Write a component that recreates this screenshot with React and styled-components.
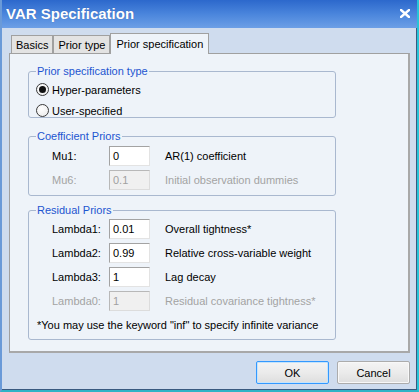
import { styled, createGlobalStyle } from "styled-components";

const GlobalStyle = createGlobalStyle`
  html, body {
    margin: 0;
    padding: 0;
    background: #cfdcee;
  }
  * {
    box-sizing: border-box;
  }
`;

const Window = styled.div`
  width: 419px;
  height: 392px;
  display: flex;
  flex-direction: column;
  background: #cfdcee;
  font-family: "Liberation Sans", Arial, sans-serif;
  font-size: 11px;
  line-height: 14px;
  color: #000;
  border-left: 2px solid #6a9ad8;
  border-right: 2px solid #28c3d6;
  border-bottom: 2px solid #2fb3c6;
  box-shadow: inset -1px -1px 0 #3a5a80;
  overflow: hidden;
`;

const TitleBar = styled.div`
  height: 28px;
  flex: none;
  display: flex;
  align-items: center;
  justify-content: space-between;
  padding: 0 7px 1px 4px;
  background: linear-gradient(#2c68cc, #4a85dc 50%, #6c9fe6);
  color: #fff;
`;

const Title = styled.span`
  font-weight: bold;
  font-size: 15px;
  text-shadow: 0 0 1px rgba(0, 0, 60, 0.3);
`;

const Body = styled.div`
  flex: 1;
  display: flex;
  flex-direction: column;
  padding: 5px 7px 0 7px;
`;

const TabRow = styled.div`
  display: flex;
  align-items: flex-end;
  height: 20px;
  padding-left: 2px;
`;

const Tab = styled.div`
  height: ${(p) => (p.$active ? "21px" : "18px")};
  padding: 0 ${(p) => (p.$active ? "5px" : "4px")} ${(p) => (p.$active ? "1px" : "0")};
  display: flex;
  align-items: center;
  white-space: nowrap;
  background: ${(p) => (p.$active ? "#eef3f9" : "#e3e3e3")};
  border: 1px solid #a0a0a0;
  border-bottom: none;
  margin-bottom: ${(p) => (p.$active ? "-1px" : "0")};
  position: relative;
  z-index: ${(p) => (p.$active ? 2 : 1)};
`;

const Panel = styled.div`
  height: 300px;
  background: #eef3f9;
  border: 1px solid #a0a0a0;
  border-right: 2px solid #a8a8a8;
  border-bottom: 2px solid #a8a8a8;
  padding: 10px 0 0 18px;
  display: flex;
  flex-direction: column;
`;

const Group = styled.fieldset`
  width: 308px;
  margin: ${(p) => p.$top || "0"} 0 0 0;
  padding: ${(p) => p.$pad};
  border: 1px solid #a9b8cf;
  border-radius: 3px;
  display: flex;
  flex-direction: column;
  gap: ${(p) => p.$gap};
`;

const Legend = styled.legend`
  color: #1d55d0;
  padding: 0 1px;
  line-height: 14px;
`;

const RadioRow = styled.label`
  display: flex;
  align-items: center;
  gap: 3px;
  height: 13px;
`;

const RadioCircle = styled.span`
  width: 13px;
  height: 13px;
  flex: none;
  border-radius: 50%;
  border: 1px solid #3a3a3a;
  background: radial-gradient(circle at 40% 35%, #ffffff, #e8e8e8);
  display: flex;
  align-items: center;
  justify-content: center;
  &::after {
    content: "";
    width: 7px;
    height: 7px;
    border-radius: 50%;
    background: ${(p) => (p.$checked ? "#111" : "transparent")};
  }
`;

const FieldRow = styled.div`
  display: grid;
  grid-template-columns: 57px 41px max-content;
  align-items: center;
  height: 20px;
  padding-left: 16px;
  white-space: nowrap;
  color: ${(p) => (p.$disabled ? "#a3a3a3" : "#000")};
`;

const Input = styled.div`
  height: 20px;
  margin-right: 15px;
  border: 1px solid ${(p) => (p.$disabled ? "#b8b8b8" : "#a3a3a3")};
  border-right-color: ${(p) => (p.$disabled ? "#dcdcdc" : "#e3e3e3")};
  border-bottom-color: ${(p) => (p.$disabled ? "#dcdcdc" : "#e3e3e3")};
  background: ${(p) => (p.$disabled ? "#f0f0f0" : "#fff")};
  color: ${(p) => (p.$disabled ? "#a0a0a0" : "#000")};
  padding: 0 3px;
  display: flex;
  align-items: center;
`;

const FieldRowGrid = styled(FieldRow)`
  grid-template-columns: 57px 56px max-content;
`;

const Note = styled.div`
  margin-top: 3px;
  padding-left: 1px;
  white-space: nowrap;
`;

const Footer = styled.div`
  display: flex;
  justify-content: flex-end;
  gap: 8px;
  padding: 8px 0 0 0;
`;

const Button = styled.button`
  width: 73px;
  height: 23px;
  font-family: inherit;
  font-size: 11px;
  color: #000;
  background: linear-gradient(#f4f4f4, #ebebeb 50%, #dedede);
  border: 1px solid ${(p) => (p.$default ? "#3399ff" : "#acacac")};
  box-shadow: ${(p) => (p.$default ? "inset 0 0 0 1px #c6e4fb" : "inset 0 0 0 1px #f8f8f8")};
  border-radius: 2px;
  padding: 0;
`;

const CloseIcon = () => (
  <svg width="10" height="9" viewBox="0 0 10 9">
    <path d="M1 1 L9 8 M9 1 L1 8" stroke="#fff" strokeWidth="2.4" strokeLinecap="square" />
  </svg>
);

const Field = ({ label, value, text, disabled }) => (
  <FieldRowGrid $disabled={disabled}>
    <span>{label}</span>
    <Input $disabled={disabled}>{value}</Input>
    <span>{text}</span>
  </FieldRowGrid>
);

export default function App() {
  return (
    <>
      <GlobalStyle />
      <Window>
        <TitleBar>
          <Title>VAR Specification</Title>
          <CloseIcon />
        </TitleBar>
        <Body>
          <TabRow>
            <Tab>Basics</Tab>
            <Tab>Prior type</Tab>
            <Tab $active>Prior specification</Tab>
          </TabRow>
          <Panel>
            <Group $pad="5px 7px 0 7px" $gap="8px">
              <Legend>Prior specification type</Legend>
              <RadioRow>
                <RadioCircle $checked />
                Hyper-parameters
              </RadioRow>
              <RadioRow>
                <RadioCircle />
                User-specified
              </RadioRow>
            </Group>
            <Group $top="11px" $pad="3px 7px 5px 7px" $gap="4px">
              <Legend>Coefficient Priors</Legend>
              <Field label="Mu1:" value="0" text="AR(1) coefficient" />
              <Field label="Mu6:" value="0.1" text="Initial observation dummies" disabled />
            </Group>
            <Group $top="7px" $pad="2px 7px 7px 7px" $gap="4px">
              <Legend>Residual Priors</Legend>
              <Field label="Lambda1:" value="0.01" text="Overall tightness*" />
              <Field label="Lambda2:" value="0.99" text="Relative cross-variable weight" />
              <Field label="Lambda3:" value="1" text="Lag decay" />
              <Field label="Lambda0:" value="1" text="Residual covariance tightness*" disabled />
              <Note>*You may use the keyword "inf" to specify infinite variance</Note>
            </Group>
          </Panel>
          <Footer>
            <Button $default>OK</Button>
            <Button>Cancel</Button>
          </Footer>
        </Body>
      </Window>
    </>
  );
}
